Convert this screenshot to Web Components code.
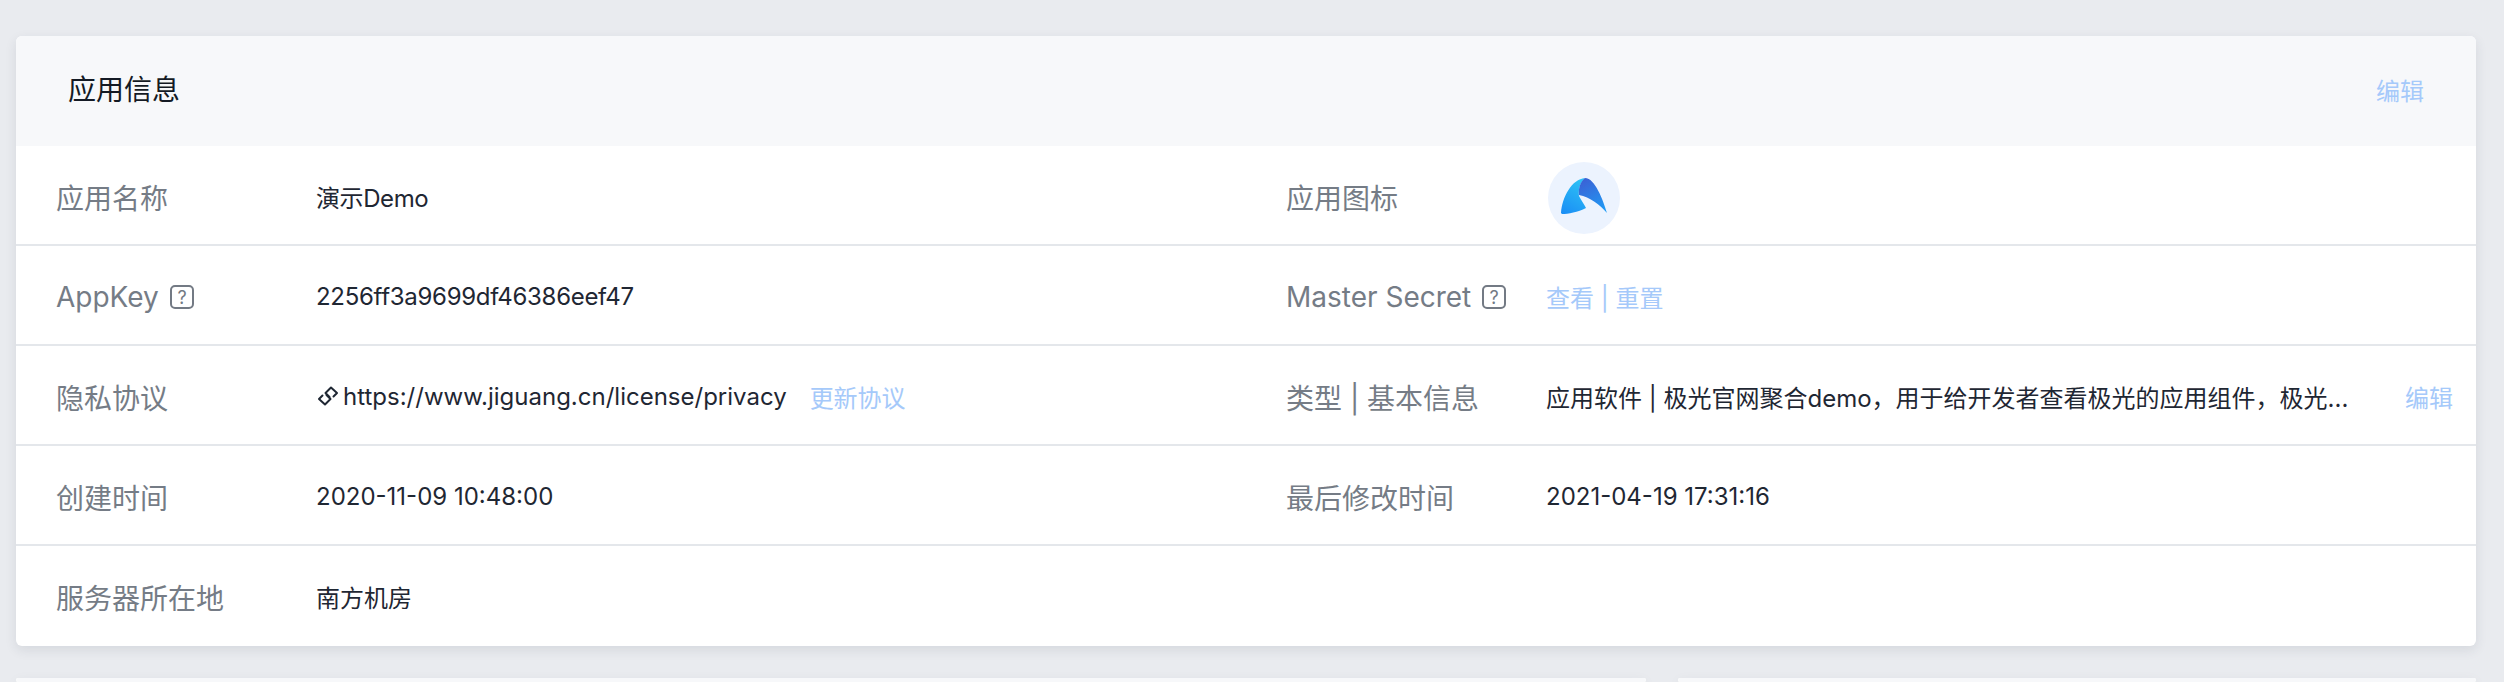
<!DOCTYPE html>
<html lang="zh">
<head>
<meta charset="utf-8">
<title>应用信息</title>
<style>
  html, body { margin: 0; height: 100%; overflow: hidden; }
  body {
    background: #e9ebef;
    font-family: Inter, "Noto Sans CJK SC", sans-serif;
    color: #1f2733;
  }
  .page { padding: 36px 28px 0 16px; display: flex; flex-direction: column; gap: 32px; }
  .lower { display: grid; grid-template-columns: 1630px 798px; gap: 32px; }
  .lower info-card { height: 4px; }
</style>
</head>
<body>
<div class="page">
  <info-card title-text="应用信息" action="编辑">
    <info-row>
      <info-cell label="应用名称"><span style="letter-spacing:-.4px">演示Demo</span></info-cell>
      <info-cell label="应用图标"><app-logo></app-logo></info-cell>
    </info-row>
    <info-row>
      <info-cell label="AppKey" help><span style="letter-spacing:-.3px">2256ff3a9699df46386eef47</span></info-cell>
      <info-cell label="Master Secret" help><link-text>查看 | 重置</link-text></info-cell>
    </info-row>
    <info-row>
      <info-cell label="隐私协议"><link-icon></link-icon>https://www.jiguang.cn/license/privacy<link-text style="margin-left:23px">更新协议</link-text></info-cell>
      <info-cell label="类型 | 基本信息">应用软件 | 极光官网聚合demo，用于给开发者查看极光的应用组件，极光...<link-text style="margin-left:auto">编辑</link-text></info-cell>
    </info-row>
    <info-row>
      <info-cell label="创建时间">2020-11-09 10:48:00</info-cell>
      <info-cell label="最后修改时间">2021-04-19 17:31:16</info-cell>
    </info-row>
    <info-row last>
      <info-cell label="服务器所在地">南方机房</info-cell>
      <info-cell></info-cell>
    </info-row>
  </info-card>
  <div class="lower">
    <info-card></info-card>
    <info-card></info-card>
  </div>
</div>

<script>
  class InfoCard extends HTMLElement {
    constructor() {
      super();
      this.shadowDOM = this.attachShadow({ mode: "open" });
    }
    connectedCallback() {
      this.shadowDOM.innerHTML = `
        <style>
          :host {
            display: block;
            background: #fff;
            border-radius: 6px;
            box-shadow: 0 4px 12px rgba(40, 50, 70, 0.1);
            overflow: hidden;
          }
          header {
            height: 110px;
            box-sizing: border-box;
            padding: 0 52px 6px;
            background: #f7f8fa;
            display: flex;
            align-items: center;
            justify-content: space-between;
            font-size: 28px;
            color: #141a24;
          }
          a { font-size: 24px; color: #a5c9fa; margin-top: 2px; }
        </style>
        <header>
          <span>${this.getAttribute("title-text") || ""}</span>
          <a>${this.getAttribute("action") || ""}</a>
        </header>
        <slot></slot>
      `;
    }
  }

  class InfoRow extends HTMLElement {
    constructor() {
      super();
      this.shadowDOM = this.attachShadow({ mode: "open" });
      this.shadowDOM.innerHTML = `
        <style>
          :host {
            display: grid;
            grid-template-columns: 1fr 1fr;
            height: 100px;
            box-sizing: border-box;
            border-bottom: 2px solid #e4e7eb;
          }
          :host([last]) { border-bottom-color: transparent; }
        </style>
        <slot></slot>
      `;
    }
  }

  class InfoCell extends HTMLElement {
    constructor() {
      super();
      this.shadowDOM = this.attachShadow({ mode: "open" });
    }
    connectedCallback() {
      const label = this.getAttribute("label") || "";
      const help = this.hasAttribute("help")
        ? `<svg width="24" height="24" viewBox="0 0 24 24" fill="none">
             <rect x="1" y="1" width="22" height="22" rx="4" stroke="#737a84" stroke-width="2"/>
             <text x="12" y="18.5" text-anchor="middle" font-size="18" fill="#737a84">?</text>
           </svg>`
        : "";
      this.shadowDOM.innerHTML = `
        <style>
          :host {
            display: flex;
            align-items: center;
            padding-left: 40px;
            font-size: 24px;
          }
          .label {
            width: 260px;
            flex: none;
            display: flex;
            align-items: center;
            gap: 11px;
            margin-top: 4px;
            font-size: 28px;
            color: #757c86;
          }
          .value {
            flex: 1;
            display: flex;
            align-items: center;
            margin-top: 2px;
            padding-right: 23px;
            white-space: nowrap;
            color: #1f2733;
          }
        </style>
        <div class="label">${label}${help}</div>
        <div class="value"><slot></slot></div>
      `;
    }
  }

  class LinkText extends HTMLElement {
    constructor() {
      super();
      this.attachShadow({ mode: "open" }).innerHTML = `
        <style>:host { display: inline-block; color: #a5c9fa; font-size: 24px; }</style>
        <slot></slot>
      `;
    }
  }

  class LinkIcon extends HTMLElement {
    constructor() {
      super();
      this.attachShadow({ mode: "open" }).innerHTML = `
        <style>:host { display: inline-flex; margin: 0 4px 0 1px; }</style>
        <svg width="22" height="24" viewBox="0 0 22 24" fill="none" stroke="#1f2733" stroke-width="2" stroke-linejoin="round" stroke-linecap="round">
          <path d="M12.5 13 L8.5 9 L14 3.5 L20 9 L16.5 12.5"/>
          <path d="M9.5 11 L13.5 15 L8 20.5 L2 15 L5.5 11.5"/>
        </svg>
      `;
    }
  }

  class AppLogo extends HTMLElement {
    constructor() {
      super();
      this.attachShadow({ mode: "open" }).innerHTML = `
        <style>:host { display: block; width: 72px; height: 72px; margin: 4px 0 0 2px; }</style>
        <svg width="72" height="72" viewBox="0 0 72 72">
          <defs>
            <linearGradient id="a" x1="0.2" y1="1" x2="0.6" y2="0">
              <stop offset="0" stop-color="#1b8ff5"/>
              <stop offset="1" stop-color="#2cc0f5"/>
            </linearGradient>
            <linearGradient id="b" x1="0.3" y1="0" x2="0.8" y2="1">
              <stop offset="0" stop-color="#3a63d6"/>
              <stop offset="1" stop-color="#1f9bf5"/>
            </linearGradient>
          </defs>
          <circle cx="36" cy="36" r="36" fill="#ecf3fe"/>
          <path fill="url(#a)" d="M13 51C14 35 24 17 37 16C33 20 30 26 31 34C33 38 36 42 38 46C30 50 20 52 14 52Z"/>
          <path fill="url(#b)" d="M37 16C47 16 55 38 59 51C52 43 42 35 31 33C30 26 33 19 37 16Z"/>
        </svg>
      `;
    }
  }

  customElements.define("info-card", InfoCard);
  customElements.define("info-row", InfoRow);
  customElements.define("info-cell", InfoCell);
  customElements.define("link-text", LinkText);
  customElements.define("link-icon", LinkIcon);
  customElements.define("app-logo", AppLogo);
</script>
</body>
</html>
